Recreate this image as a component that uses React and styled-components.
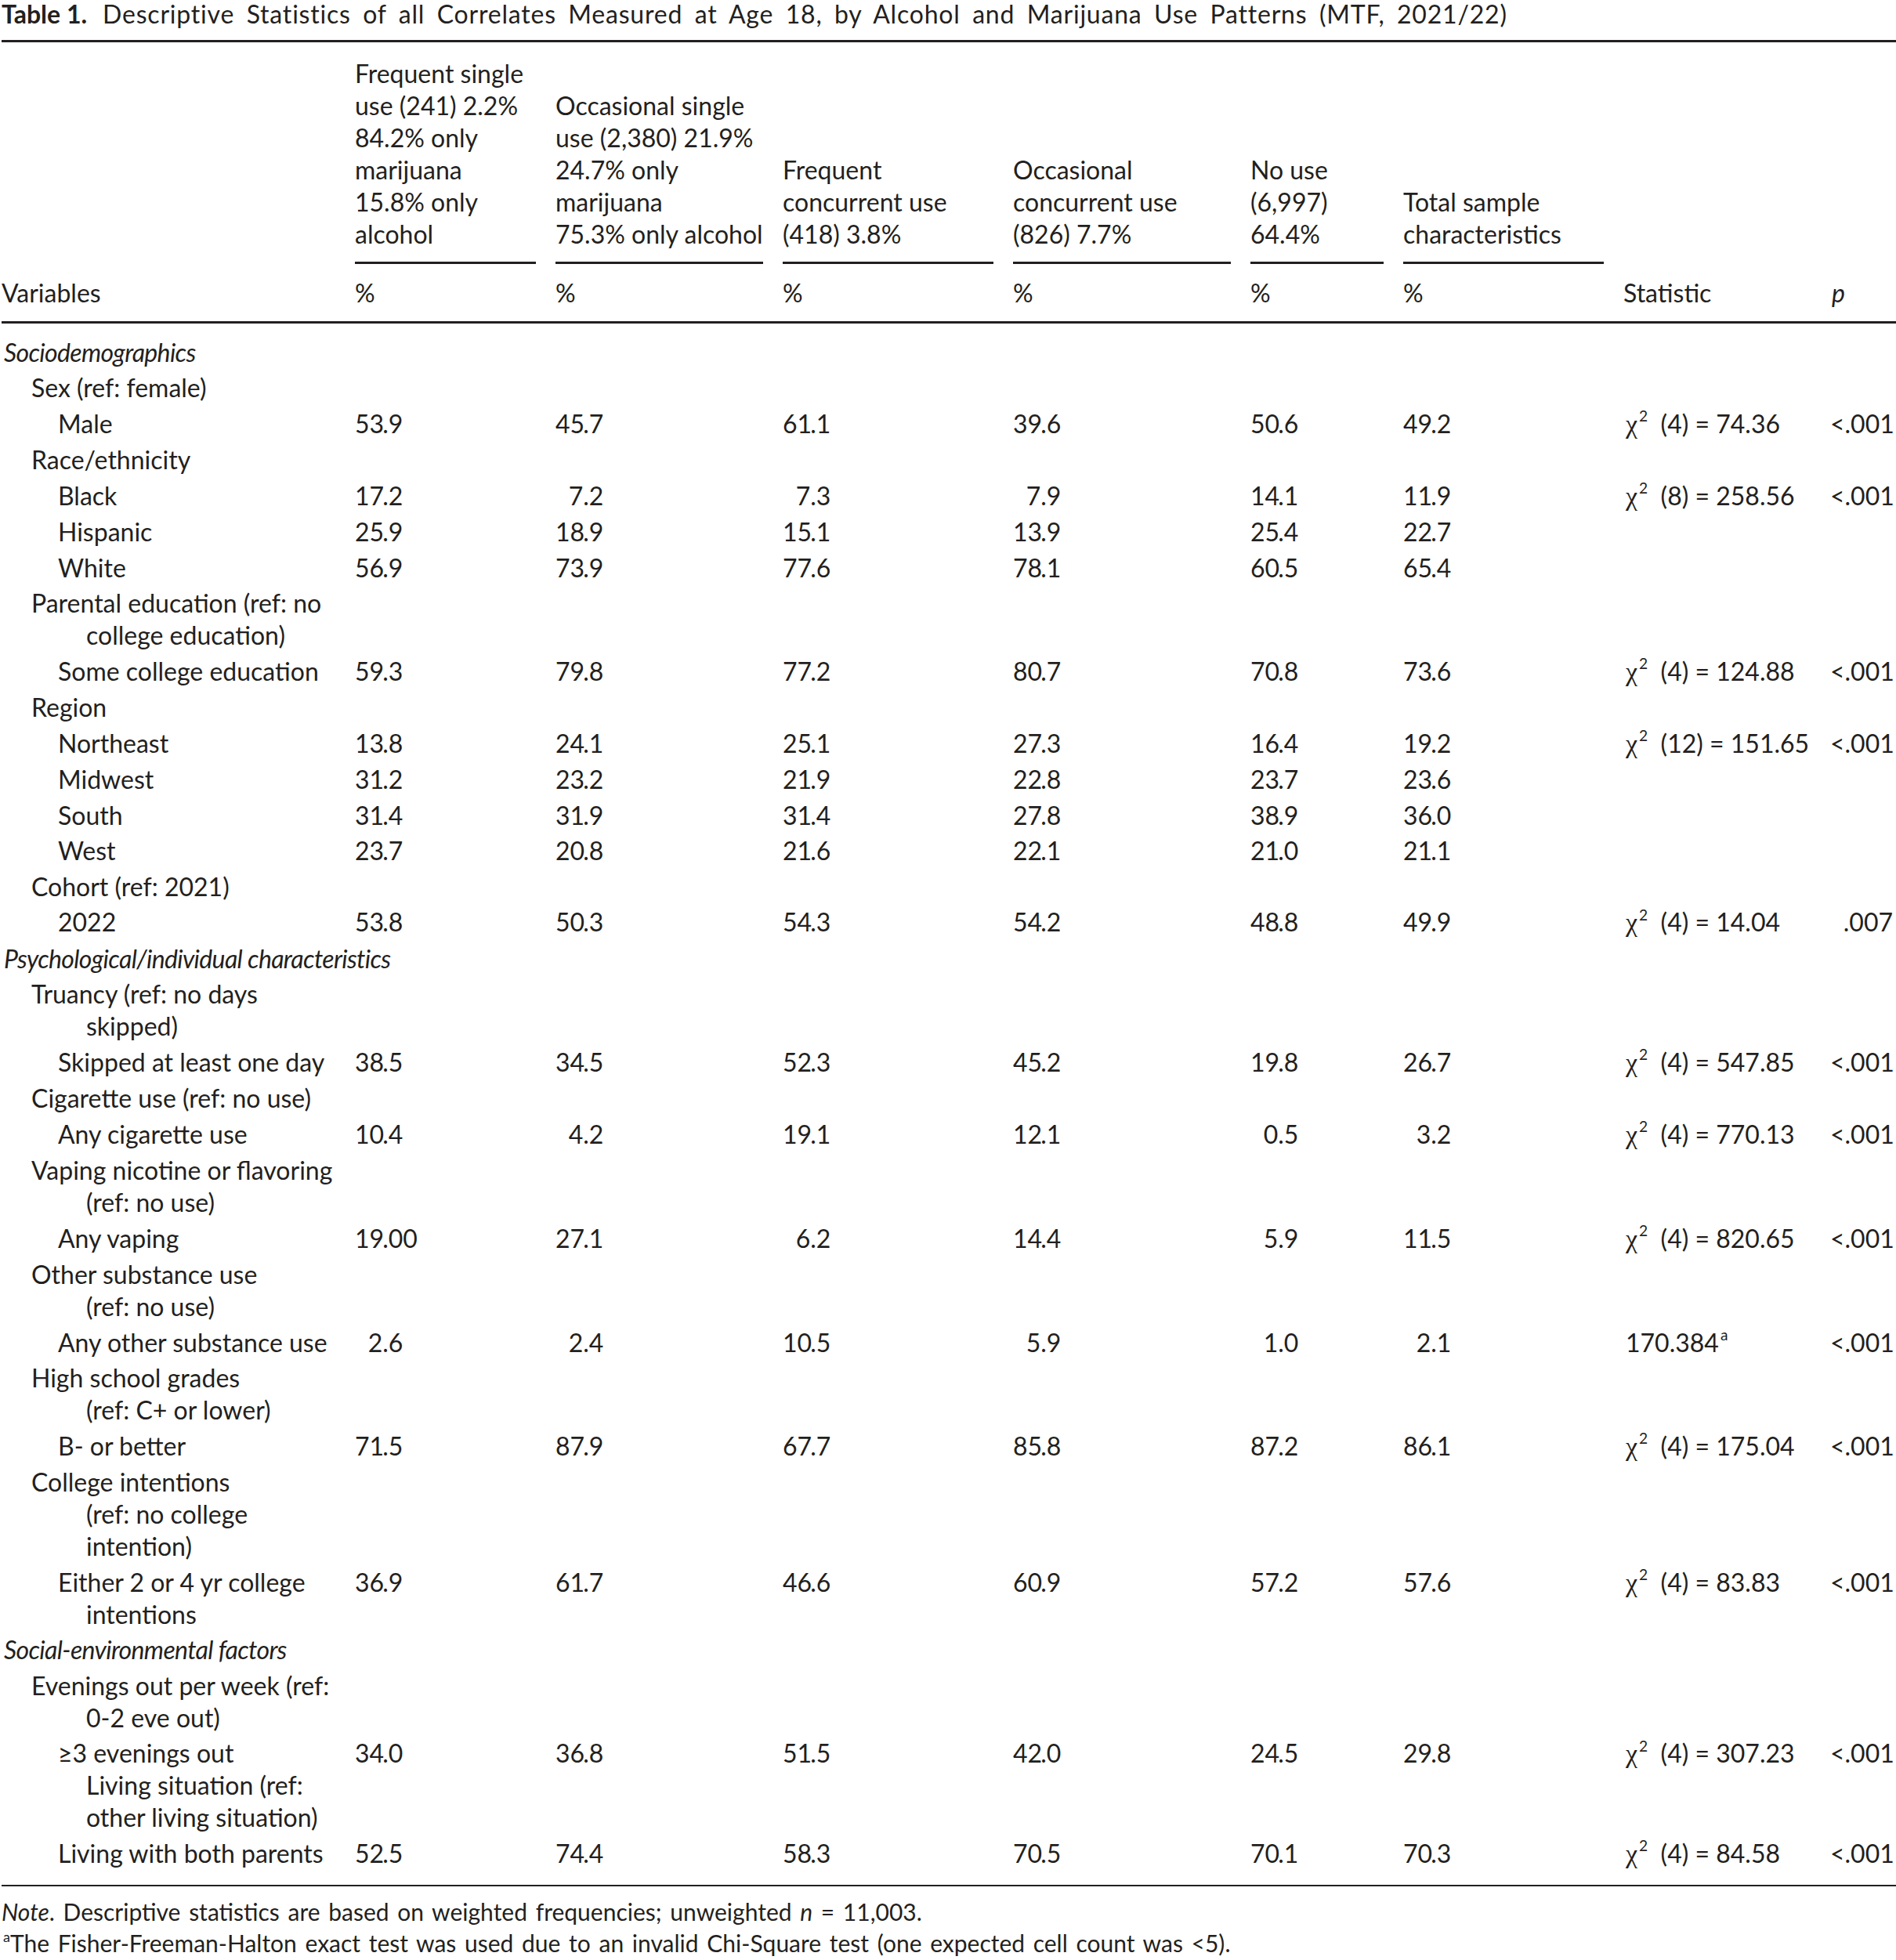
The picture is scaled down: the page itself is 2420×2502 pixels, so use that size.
import React from 'react';
import styled, { createGlobalStyle } from 'styled-components';

const GlobalStyle = createGlobalStyle`
    html, body {
        margin: 0;
        padding: 0;
        background: #fff;
    }
    body {
        font-family: Lato, "Open Sans", sans-serif;
        color: #231f20;
    }
`;

const Page = styled.div`
    width: 2418px;
    padding-left: 2px;
    font-size: 32px;
`;

const Caption = styled.div`
    font-size: 32px;
    line-height: 36px;
    padding-bottom: 15px;
    white-space: nowrap;
    letter-spacing: 0.8px;
    word-spacing: 6.5px;
`;

const CaptionLabel = styled.span`
    font-weight: 700;
    margin-right: 20px;
    letter-spacing: 0;
    word-spacing: 0;
`;

const Table = styled.table`
    width: 2418px;
    table-layout: fixed;
    border-collapse: collapse;
    border-top: 3px solid #231f20;
    border-bottom: 2px solid #231f20;
`;

const HeadRow = styled.tr`
    vertical-align: bottom;
`;

const GroupHead = styled.th`
    font-weight: 400;
    text-align: left;
    padding: 19px 0 0 0;
    line-height: 41px;
`;

const GroupLabel = styled.div`
    margin-right: 25px;
    padding-bottom: 15px;
    border-bottom: 3px solid #231f20;
    white-space: nowrap;
`;

const UnitRow = styled.tr`
    border-bottom: 3px solid #231f20;
`;

const UnitHead = styled.th`
    font-weight: 400;
    text-align: left;
    padding: 16px 0 16px ${(p) => (p.$italic ? '2px' : '0')};
    line-height: 41px;
    font-style: ${(p) => (p.$italic ? 'italic' : 'normal')};
`;

const Spacer = styled.tr`
    height: ${(p) => p.$h}px;
`;

const Row = styled.tr`
    vertical-align: top;
`;

const indent = [3, 38, 72];

const VarCell = styled.td`
    padding: 2px 0 2.5px ${(p) => indent[p.$level]}px;
    line-height: 41px;
    font-style: ${(p) => (p.$italic ? 'italic' : 'normal')};
    letter-spacing: ${(p) => (p.$italic ? '-0.65px' : '0')};
    white-space: nowrap;
`;

const ContLine = styled.div`
    padding-left: ${(p) => 108 - indent[p.$level]}px;
`;

const ValCell = styled.td`
    padding: 2px 0 2.5px 0;
    line-height: 41px;
    white-space: nowrap;
`;

const IntPart = styled.span`
    display: inline-block;
    width: 1.1em;
    text-align: right;
`;

const StatCell = styled.td`
    padding: 2px 0 2.5px 3px;
    line-height: 41px;
    white-space: nowrap;
`;

const PCell = styled.td`
    padding: 2px 4px 2.5px 0;
    line-height: 41px;
    text-align: right;
    white-space: nowrap;
`;

const Chi = styled.span`
    font-family: "Liberation Serif", serif;
    font-size: 34px;
`;

const Sup = styled.sup`
    font-size: 0.6em;
    line-height: 0;
    vertical-align: 0.75em;
    margin-left: 2px;
`;

const Notes = styled.div`
    font-size: 30px;
    line-height: 40px;
    padding-top: 12px;
    white-space: nowrap;
    word-spacing: 3px;
`;

const groups = [
    ['Frequent single', 'use (241) 2.2%', '84.2% only', 'marijuana', '15.8% only', 'alcohol'],
    ['Occasional single', 'use (2,380) 21.9%', '24.7% only', 'marijuana', '75.3% only alcohol'],
    ['Frequent', 'concurrent use', '(418) 3.8%'],
    ['Occasional', 'concurrent use', '(826) 7.7%'],
    ['No use', '(6,997)', '64.4%'],
    ['Total sample', 'characteristics'],
];

const rows = [
    { label: ['Sociodemographics'], level: 0, italic: true },
    { label: ['Sex (ref: female)'], level: 1 },
    { label: ['Male'], level: 2, vals: ['53.9', '45.7', '61.1', '39.6', '50.6', '49.2'], stat: { df: 4, v: '74.36' }, p: '<.001' },
    { label: ['Race/ethnicity'], level: 1 },
    { label: ['Black'], level: 2, vals: ['17.2', '7.2', '7.3', '7.9', '14.1', '11.9'], stat: { df: 8, v: '258.56' }, p: '<.001' },
    { label: ['Hispanic'], level: 2, vals: ['25.9', '18.9', '15.1', '13.9', '25.4', '22.7'] },
    { label: ['White'], level: 2, vals: ['56.9', '73.9', '77.6', '78.1', '60.5', '65.4'] },
    { label: ['Parental education (ref: no', 'college education)'], level: 1 },
    { label: ['Some college education'], level: 2, vals: ['59.3', '79.8', '77.2', '80.7', '70.8', '73.6'], stat: { df: 4, v: '124.88' }, p: '<.001' },
    { label: ['Region'], level: 1 },
    { label: ['Northeast'], level: 2, vals: ['13.8', '24.1', '25.1', '27.3', '16.4', '19.2'], stat: { df: 12, v: '151.65' }, p: '<.001' },
    { label: ['Midwest'], level: 2, vals: ['31.2', '23.2', '21.9', '22.8', '23.7', '23.6'] },
    { label: ['South'], level: 2, vals: ['31.4', '31.9', '31.4', '27.8', '38.9', '36.0'] },
    { label: ['West'], level: 2, vals: ['23.7', '20.8', '21.6', '22.1', '21.0', '21.1'] },
    { label: ['Cohort (ref: 2021)'], level: 1 },
    { label: ['2022'], level: 2, vals: ['53.8', '50.3', '54.3', '54.2', '48.8', '49.9'], stat: { df: 4, v: '14.04' }, p: '.007' },
    { label: ['Psychological/individual characteristics'], level: 0, italic: true },
    { label: ['Truancy (ref: no days', 'skipped)'], level: 1 },
    { label: ['Skipped at least one day'], level: 2, vals: ['38.5', '34.5', '52.3', '45.2', '19.8', '26.7'], stat: { df: 4, v: '547.85' }, p: '<.001' },
    { label: ['Cigarette use (ref: no use)'], level: 1 },
    { label: ['Any cigarette use'], level: 2, vals: ['10.4', '4.2', '19.1', '12.1', '0.5', '3.2'], stat: { df: 4, v: '770.13' }, p: '<.001' },
    { label: ['Vaping nicotine or flavoring', '(ref: no use)'], level: 1 },
    { label: ['Any vaping'], level: 2, vals: ['19.00', '27.1', '6.2', '14.4', '5.9', '11.5'], stat: { df: 4, v: '820.65' }, p: '<.001' },
    { label: ['Other substance use', '(ref: no use)'], level: 1 },
    { label: ['Any other substance use'], level: 2, vals: ['2.6', '2.4', '10.5', '5.9', '1.0', '2.1'], stat: { raw: '170.384', note: 'a' }, p: '<.001' },
    { label: ['High school grades', '(ref: C+ or lower)'], level: 1 },
    { label: ['B- or better'], level: 2, vals: ['71.5', '87.9', '67.7', '85.8', '87.2', '86.1'], stat: { df: 4, v: '175.04' }, p: '<.001' },
    { label: ['College intentions', '(ref: no college', 'intention)'], level: 1 },
    { label: ['Either 2 or 4 yr college', 'intentions'], level: 2, vals: ['36.9', '61.7', '46.6', '60.9', '57.2', '57.6'], stat: { df: 4, v: '83.83' }, p: '<.001' },
    { label: ['Social-environmental factors'], level: 0, italic: true },
    { label: ['Evenings out per week (ref:', '0-2 eve out)'], level: 1 },
    { label: ['≥3 evenings out', 'Living situation (ref:', 'other living situation)'], level: 2, vals: ['34.0', '36.8', '51.5', '42.0', '24.5', '29.8'], stat: { df: 4, v: '307.23' }, p: '<.001' },
    { label: ['Living with both parents'], level: 2, vals: ['52.5', '74.4', '58.3', '70.5', '70.1', '70.3'], stat: { df: 4, v: '84.58' }, p: '<.001' },
];

const widths = [451, 256, 290, 294, 303, 195, 281, 264, 84];

const Num = ({ value }) => {
    const [int, dec] = value.split('.');
    return (
        <>
            <IntPart>{int}</IntPart>.{dec}
        </>
    );
};

const Stat = ({ stat }) => {
    if (!stat) return null;
    if (stat.raw) {
        return (
            <>
                {stat.raw}<Sup>{stat.note}</Sup>
            </>
        );
    }
    return (
        <>
            <Chi>χ</Chi><Sup>2</Sup>&nbsp; ({stat.df}) = {stat.v}
        </>
    );
};

const App = () => {
    return (
        <Page>
            <GlobalStyle />
            <Caption>
                <CaptionLabel>Table 1.</CaptionLabel>
                Descriptive Statistics of all Correlates Measured at Age 18, by Alcohol and Marijuana Use Patterns (MTF, 2021/22)
            </Caption>
            <Table>
                <colgroup>
                    {widths.map((w, i) => (
                        <col key={i} style={{ width: w }} />
                    ))}
                </colgroup>
                <thead>
                    <HeadRow>
                        <GroupHead />
                        {groups.map((lines, i) => (
                            <GroupHead key={i}>
                                <GroupLabel>
                                    {lines.map((l, j) => (
                                        <div key={j}>{l}</div>
                                    ))}
                                </GroupLabel>
                            </GroupHead>
                        ))}
                        <GroupHead />
                        <GroupHead />
                    </HeadRow>
                    <UnitRow>
                        <UnitHead>Variables</UnitHead>
                        {groups.map((_, i) => (
                            <UnitHead key={i}>%</UnitHead>
                        ))}
                        <UnitHead>Statistic</UnitHead>
                        <UnitHead $italic>p</UnitHead>
                    </UnitRow>
                </thead>
                <tbody>
                    <Spacer $h={15} />
                    {rows.map((r, i) => (
                        <Row key={i}>
                            <VarCell $level={r.level} $italic={r.italic}>
                                {r.label[0]}
                                {r.label.slice(1).map((l, j) => (
                                    <ContLine key={j} $level={r.level}>{l}</ContLine>
                                ))}
                            </VarCell>
                            {Array.from({ length: 6 }).map((_, j) => (
                                <ValCell key={j}>{r.vals ? <Num value={r.vals[j]} /> : null}</ValCell>
                            ))}
                            <StatCell><Stat stat={r.stat} /></StatCell>
                            <PCell>{r.p}</PCell>
                        </Row>
                    ))}
                    <Spacer $h={18} />
                </tbody>
            </Table>
            <Notes>
                <div>
                    <i>Note</i>. Descriptive statistics are based on weighted frequencies; unweighted <i>n</i> = 11,003.
                </div>
                <div>
                    <Sup>a</Sup>The Fisher-Freeman-Halton exact test was used due to an invalid Chi-Square test (one expected cell count was &lt;5).
                </div>
            </Notes>
        </Page>
    );
};

export default App;
